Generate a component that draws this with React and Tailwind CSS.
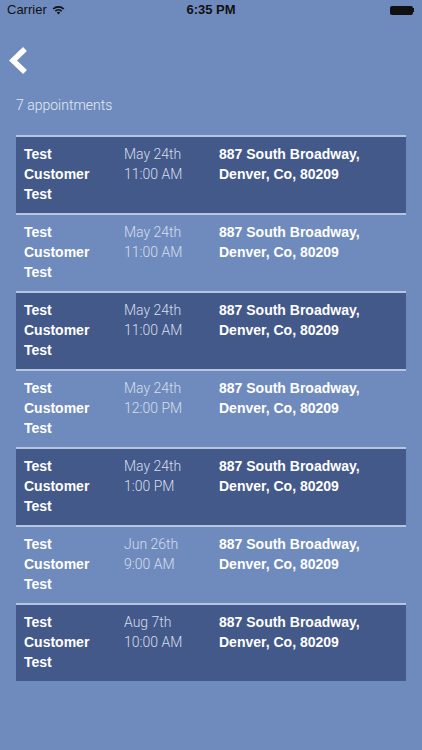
const rows = [
  { date: "May 24th", time: "11:00 AM", dark: true },
  { date: "May 24th", time: "11:00 AM", dark: false },
  { date: "May 24th", time: "11:00 AM", dark: true },
  { date: "May 24th", time: "12:00 PM", dark: false },
  { date: "May 24th", time: "1:00 PM", dark: true },
  { date: "Jun 26th", time: "9:00 AM", dark: false },
  { date: "Aug 7th", time: "10:00 AM", dark: true },
];

function Wifi() {
  return (
    <svg width="13" height="10" viewBox="0 0 13 10" className="ml-[5px]">
      <path d="M0.6 3.4 A8.5 8.5 0 0 1 12.4 3.4 L11.2 4.6 A6.8 6.8 0 0 0 1.8 4.6 Z" fill="#111" />
      <path d="M2.7 5.5 A5.5 5.5 0 0 1 10.3 5.5 L9.1 6.7 A3.8 3.8 0 0 0 3.9 6.7 Z" fill="#111" />
      <path d="M4.8 7.6 A2.6 2.6 0 0 1 8.2 7.6 L6.5 9.4 Z" fill="#111" />
    </svg>
  );
}

function StatusBar() {
  return (
    <div className="relative flex h-[20px] items-center justify-between px-[7px] text-[13px] text-[#111]">
      <div className="flex items-center">
        <span>Carrier</span>
        <Wifi />
      </div>
      <span className="absolute left-1/2 -translate-x-1/2 font-semibold">6:35 PM</span>
      <div className="flex items-center pr-[1px]">
        <div className="h-[9px] w-[23px] rounded-[2px] bg-[#111]" />
        <div className="h-[4px] w-[1.5px] bg-[#111]" />
      </div>
    </div>
  );
}

function BackChevron() {
  return (
    <svg width="24" height="30" viewBox="0 0 24 30">
      <polyline
        points="19,3 7,14.5 19,26"
        fill="none"
        stroke="#fff"
        strokeWidth="5.5"
        strokeLinecap="butt"
        strokeLinejoin="miter"
      />
    </svg>
  );
}

export default function App() {
  return (
    <div
      className="min-h-[750px] w-full bg-[#6f8bbe] text-white"
      style={{ fontFamily: '"Liberation Sans", Arial, sans-serif' }}
    >
      <StatusBar />
      <div className="h-[75px] pl-[6px] pt-[26px]">
        <BackChevron />
      </div>
      <div
        className="px-4 text-[14px] font-light text-[#e4eaf4]"
        style={{ fontFamily: 'Roboto, "Liberation Sans", sans-serif' }}
      >
        7 appointments
      </div>
      <div className="mx-4 mt-[19px]">
        {rows.map((r, i) => (
          <div
            key={i}
            className={`grid grid-cols-[100px_95px_1fr] border-t-2 border-[#b7c5de] pl-2 pt-[7px] pb-[9px] text-[14px] leading-[20px] ${
              r.dark ? "bg-[#43598a]" : ""
            }`}
          >
            <div className="font-bold">
              <div>Test</div>
              <div>Customer</div>
              <div>Test</div>
            </div>
            <div
              className="font-light text-[#d6deeb]"
              style={{ fontFamily: 'Roboto, "Liberation Sans", sans-serif' }}
            >
              <div>{r.date}</div>
              <div>{r.time}</div>
            </div>
            <div className="font-bold">
              <div>887 South Broadway,</div>
              <div>Denver, Co, 80209</div>
            </div>
          </div>
        ))}
      </div>
    </div>
  );
}
